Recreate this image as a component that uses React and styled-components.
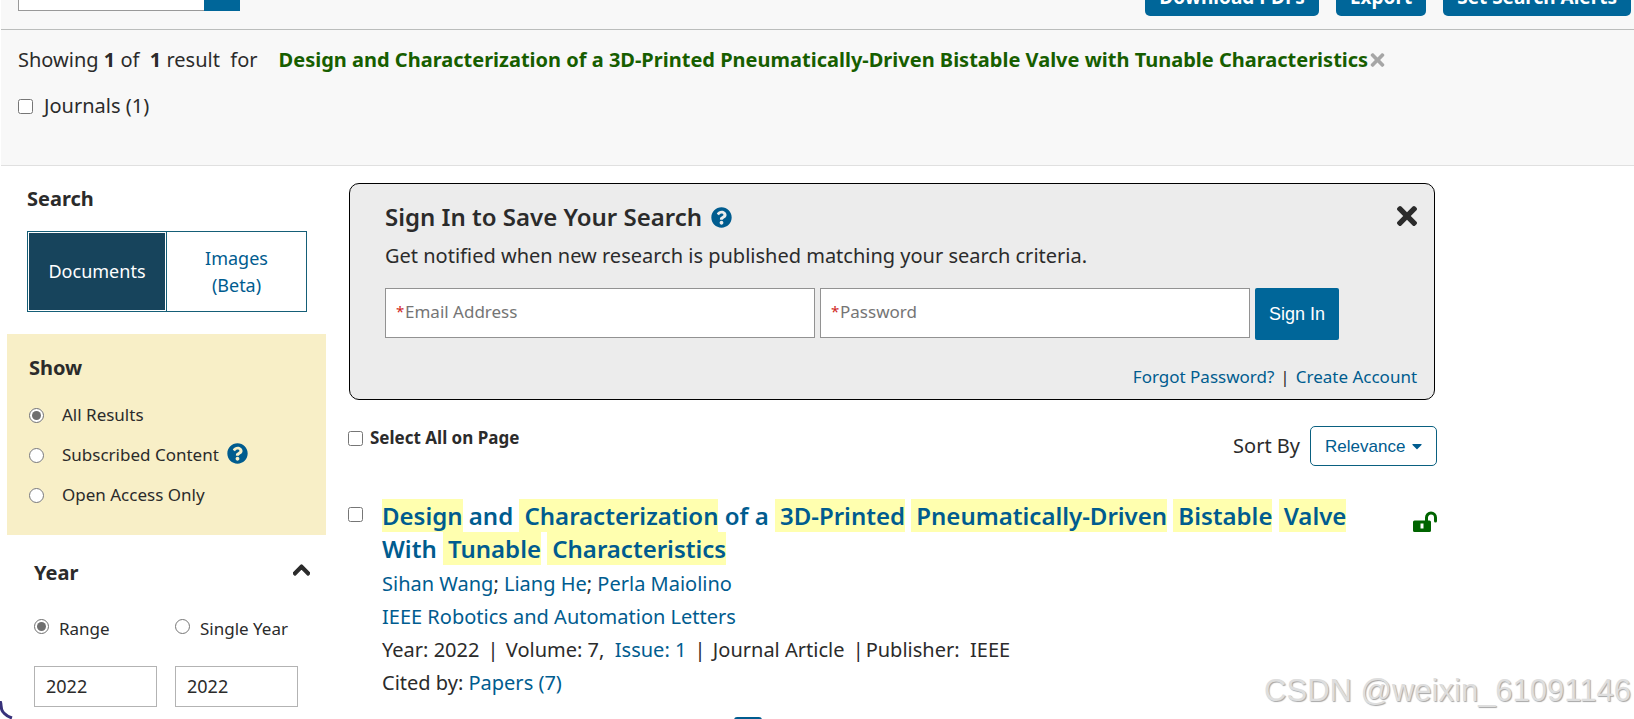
import React from "react";
import styled, { createGlobalStyle } from "styled-components";
import {
  FaChevronUp,
  FaCaretDown,
  FaQuestionCircle,
  FaTimes,
} from "react-icons/fa";

const GlobalStyle = createGlobalStyle`
  * {
    box-sizing: border-box;
  }

  body {
    margin: 0;
    background: #fff;
    color: #2b2b2b;
    font-family: "Noto Sans", "Open Sans", sans-serif;
    font-size: 20px;
    line-height: 28px;
  }

  h2, h3, p {
    margin: 0;
  }

  input, button, select {
    font-family: inherit;
  }

  input[type="checkbox"], input[type="radio"] {
    flex: none;
    width: 15px;
    height: 15px;
    margin: 0;
    accent-color: #6f6f6f;
  }
`;

const Page = styled.div`
  position: relative;
  height: 100vh;
  padding-left: 1px;
  overflow: hidden;
`;

const Toolbar = styled.header`
  display: flex;
  justify-content: space-between;
  align-items: flex-end;
  height: 30px;
  padding: 0 3px 0 17px;
  overflow: hidden;
  background: #f8f8f8;
  border-bottom: 1px solid #bbbdbc;
`;

const SearchWithin = styled.form`
  display: flex;
  width: 222px;
  margin-bottom: 18px;

  input {
    flex: 1;
    min-width: 0;
    height: 40px;
    border: 1px solid #999;
    border-right: 0;
    background: #fff;
  }

  button {
    width: 36px;
    border: 0;
    background: #069;
  }
`;

const ToolbarActions = styled.div`
  display: flex;
  gap: 17px;
  margin-bottom: 13px;
`;

const ActionButton = styled.button`
  height: 38px;
  padding: 0 14px;
  border: 0;
  border-radius: 5px;
  background: #069;
  color: #fff;
  font-size: 19px;
  font-weight: 700;
  white-space: nowrap;
`;

const Summary = styled.section`
  display: flex;
  flex-direction: column;
  gap: 18px;
  padding: 16px 17px 45px;
  background: #f8f8f8;
  border-bottom: 1px solid #e0e0e0;
`;

const ResultCount = styled.div`
  display: flex;
  align-items: center;
  white-space: pre;
`;

const Query = styled.strong`
  margin-left: 21px;
  color: #175e00;
`;

const IconButton = styled.button`
  display: flex;
  align-items: center;
  padding: 0;
  border: 0;
  background: none;
  color: ${({ $color }) => $color || "#2b2b2b"};

  svg {
    width: ${({ $width }) => $width}px;
    height: ${({ $height }) => $height}px;
  }
`;

const CheckLabel = styled.label`
  display: flex;
  align-items: center;
  align-self: flex-start;
  gap: ${({ $gap }) => $gap || "11px"};
  font-size: ${({ $bold }) => ($bold ? "17px" : "20px")};
  font-weight: ${({ $bold }) => ($bold ? 700 : 400)};
  line-height: ${({ $bold }) => ($bold ? "24px" : "28px")};
`;

const Content = styled.div`
  display: flex;
  align-items: flex-start;
`;

const Sidebar = styled.aside`
  flex: none;
  width: 319px;
  margin-left: 6px;
  padding-top: 19px;
`;

const Heading = styled.h3`
  font-size: 20px;
  line-height: 28px;
`;

const SearchType = styled.section`
  padding: 0 19px 22px 20px;
`;

const TypeTabs = styled.div`
  display: grid;
  grid-template-columns: 1fr 1fr;
  height: 81px;
  margin-top: 18px;
  border: 1px solid #155e77;
`;

const TypeTab = styled.button`
  padding: 0 26px;
  border: 0;
  background: #fff;
  color: #005c8f;
  font-size: 18px;
  line-height: 27px;

  &:first-child {
    padding: 0;
    border-right: 1px solid #155e77;
  }

  ${({ $active }) =>
    $active &&
    `
    background: #17445c;
    color: #fff;
    box-shadow: inset 0 0 0 1px #fff;
  `}
`;

const ShowPanel = styled.section`
  padding: 20px 22px;
  background: #f8efc7;
`;

const RadioList = styled.div`
  margin-top: 13px;
`;

const RadioRow = styled.div`
  display: flex;
  align-items: center;
  gap: 8px;
  height: 40px;
  font-size: 17px;

  label {
    display: flex;
    align-items: center;
    gap: 18px;
  }

  > svg {
    margin-bottom: 4px;
  }
`;

const HelpIcon = styled(FaQuestionCircle)`
  width: 21px;
  height: 21px;
  color: #005c8f;
`;

const YearPanel = styled.section`
  padding: 24px 28px 0 27px;
`;

const YearHeader = styled.div`
  display: flex;
  justify-content: space-between;
  align-items: flex-start;
  margin-right: -12px;
`;

const YearGrid = styled.div`
  display: grid;
  grid-template-columns: 1fr 1fr;
  column-gap: 18px;
  row-gap: 23px;
  margin-top: 28px;

  label {
    display: flex;
    align-items: flex-start;
    gap: 10px;
    font-size: 17px;
  }

  label input {
    margin-top: 4px;
  }
`;

const YearInput = styled.input`
  width: 100%;
  height: 41px;
  padding: 0 11px 2px;
  border: 1px solid #b3b3b3;
  color: #2b2b2b;
  font-size: 18px;
`;

const Main = styled.main`
  flex: 1;
  min-width: 0;
  margin: 17px 12% 0 22px;
  padding-right: 1px;
`;

const SignInCard = styled.section`
  margin: 0 2px 0 1px;
  padding: 17px 17px 8px 35px;
  border: 1px solid #000;
  border-radius: 10px;
  background: #ececec;
`;

const CardHeader = styled.div`
  display: flex;
  justify-content: space-between;
  align-items: flex-start;
  margin-bottom: 9px;

  h2 {
    display: flex;
    align-items: center;
    gap: 9px;
    font-size: 24px;
    font-weight: 600;
    line-height: 32px;
  }
`;

const SignInForm = styled.form`
  display: flex;
  align-items: flex-start;
  gap: 5px;
  margin: 18px 78px 23px 0;
`;

const Field = styled.label`
  display: flex;
  flex: 1;
  align-items: center;
  height: 50px;
  padding: 0 10px 4px;
  border: 1px solid #929292;
  background: #fff;

  span {
    width: 9px;
    color: #d0261d;
    font-size: 15px;
  }

  input {
    flex: 1;
    min-width: 0;
    padding: 0;
    border: 0;
    outline: 0;
    font-size: 17px;
  }

  input::placeholder {
    color: #757575;
  }
`;

const SignInButton = styled.button`
  width: 84px;
  height: 52px;
  padding: 0;
  border: 0;
  border-radius: 2px;
  background: #069;
  color: #fff;

  && {
    font-family: "Liberation Sans", Arial, sans-serif;
    font-size: 18px;
  }
`;

const AccountLinks = styled.div`
  display: flex;
  justify-content: flex-end;
  gap: 6px;
  font-size: 17px;
`;

const Link = styled.a`
  color: #005c8f;
  text-decoration: none;
`;

const ListControls = styled.div`
  display: flex;
  justify-content: space-between;
  margin-top: 26px;
`;

const Sort = styled.label`
  display: flex;
  align-items: center;
  gap: 10px;
`;

const SelectBox = styled.span`
  position: relative;
  display: flex;
  align-items: center;

  select {
    width: 127px;
    height: 40px;
    padding: 0 0 0 14px;
    border: 1px solid #0a6080;
    border-radius: 5px;
    appearance: none;
    background: #fff;
    color: #005c8f;
    font-family: "Liberation Sans", Arial, sans-serif;
    font-size: 17px;
  }

  svg {
    position: absolute;
    right: 13px;
    width: 14px;
    height: 16px;
    color: #005c8f;
    pointer-events: none;
  }
`;

const Result = styled.article`
  display: flex;
  align-items: flex-start;
  margin-top: 33px;

  > input {
    margin-top: 8px;
  }
`;

const ResultBody = styled.div`
  flex: 1;
  min-width: 0;
  margin: 0 30px 0 19px;
  line-height: 33px;
`;

const ResultTitle = styled.h2`
  margin-bottom: 2px;
  font-size: 24px;
  font-weight: 600;
  line-height: 33px;
`;

const Mark = styled.mark`
  padding-left: ${({ $first }) => ($first ? 0 : "5px")};
  background: #ffffaf;
  color: inherit;
`;

const Separator = styled.span`
  margin: 0 2px 0 3px;
`;

const OpenAccessIcon = styled.svg`
  flex: none;
  width: 24px;
  height: 21px;
  margin-top: 12px;
  color: #006400;
`;

const AbstractToggle = styled.button`
  display: block;
  width: 28px;
  height: 28px;
  margin: 18px 0 0 352px;
  border: 0;
  border-radius: 3px;
  background: #005c8f;
`;

const Squiggle = styled.svg`
  position: absolute;
  left: 0;
  bottom: 0;
`;

const Watermark = styled.div`
  position: absolute;
  right: 3px;
  bottom: 10px;
  color: #dedede;
  font-family: "Liberation Sans", Arial, sans-serif;
  font-size: 31px;
  line-height: 36px;
  text-shadow: 1px 1px 1px #a6a6a6;
`;

// words of the title that matched the query are highlighted
const titleWords = [
  { text: "Design", hit: true },
  { text: "and" },
  { text: "Characterization", hit: true },
  { text: "of a" },
  { text: "3D-Printed", hit: true },
  { text: "Pneumatically-Driven", hit: true },
  { text: "Bistable", hit: true },
  { text: "Valve", hit: true },
  { text: "With" },
  { text: "Tunable", hit: true },
  { text: "Characteristics", hit: true },
];

const showOptions = [
  { text: "All Results" },
  { text: "Subscribed Content", help: true },
  { text: "Open Access Only" },
];

const authors = ["Sihan Wang", "Liang He", "Perla Maiolino"];

const Filters = () => (
  <Sidebar>
    <SearchType>
      <Heading>Search</Heading>
      <TypeTabs>
        <TypeTab type="button" $active>
          Documents
        </TypeTab>
        <TypeTab type="button">Images (Beta)</TypeTab>
      </TypeTabs>
    </SearchType>

    <ShowPanel>
      <Heading>Show</Heading>
      <RadioList>
        {showOptions.map((option, index) => (
          <RadioRow key={option.text}>
            <label>
              <input type="radio" name="show" defaultChecked={index === 0} />
              {option.text}
            </label>
            {option.help && <HelpIcon />}
          </RadioRow>
        ))}
      </RadioList>
    </ShowPanel>

    <YearPanel>
      <YearHeader>
        <Heading>Year</Heading>
        <IconButton
          type="button"
          aria-label="Collapse year"
          $width={17}
          $height={22}
        >
          <FaChevronUp stroke="currentColor" strokeWidth="30" />
        </IconButton>
      </YearHeader>
      <YearGrid>
        <label>
          <input type="radio" name="year" defaultChecked />
          Range
        </label>
        <label>
          <input type="radio" name="year" />
          Single Year
        </label>
        <YearInput aria-label="From year" defaultValue="2022" />
        <YearInput aria-label="To year" defaultValue="2022" />
      </YearGrid>
    </YearPanel>
  </Sidebar>
);

const SignIn = () => (
  <SignInCard>
    <CardHeader>
      <h2>
        Sign In to Save Your Search
        <HelpIcon />
      </h2>
      <IconButton type="button" aria-label="Close" $width={20} $height={30}>
        <FaTimes />
      </IconButton>
    </CardHeader>
    <p>
      Get notified when new research is published matching your search criteria.
    </p>
    <SignInForm>
      <Field>
        <span>*</span>
        <input type="email" aria-label="Email Address" placeholder="Email Address" />
      </Field>
      <Field>
        <span>*</span>
        <input type="password" aria-label="Password" placeholder="Password" />
      </Field>
      <SignInButton type="button">Sign In</SignInButton>
    </SignInForm>
    <AccountLinks>
      <Link href="#forgot">Forgot Password?</Link>
      <span>|</span>
      <Link href="#create">Create Account</Link>
    </AccountLinks>
  </SignInCard>
);

const ResultItem = () => (
  <Result>
    <input type="checkbox" aria-label="Select result" />
    <ResultBody>
      <ResultTitle>
        <Link href="#article">
          {titleWords.map((word, index) => (
            <React.Fragment key={word.text}>
              {index > 0 && " "}
              {word.hit ? <Mark $first={index === 0}>{word.text}</Mark> : word.text}
            </React.Fragment>
          ))}
        </Link>
      </ResultTitle>
      <p>
        {authors.map((author, index) => (
          <React.Fragment key={author}>
            {index > 0 && "; "}
            <Link href="#author">{author}</Link>
          </React.Fragment>
        ))}
      </p>
      <p>
        <Link href="#journal">IEEE Robotics and Automation Letters</Link>
      </p>
      <p>
        Year: 2022 <Separator>|</Separator> Volume: 7,&nbsp;{" "}
        <Link href="#issue">Issue: 1</Link> <Separator>|</Separator> Journal
        Article <Separator>|</Separator>Publisher:&nbsp; IEEE
      </p>
      <p>
        Cited by: <Link href="#citations">Papers (7)</Link>
      </p>
      <AbstractToggle type="button" aria-label="Abstract" />
    </ResultBody>
    <OpenAccessIcon viewBox="0 0 24 21">
      <path
        fill="currentColor"
        fillRule="evenodd"
        d="M1.5 9.5h15a1.5 1.5 0 0 1 1.5 1.5v8.500a1.500 1.500 0 0 1-1.500 1.500h-15a1.500 1.500 0 0 1-1.500-1.500v-8.500a1.500 1.500 0 0 1 1.500-1.500zM7.500 12.500v5h3v-5z"
      />
      <path
        d="M13.500 10V6.500a4.500 4.500 0 0 1 9 0v3.500"
        fill="none"
        stroke="currentColor"
        strokeWidth="3"
        strokeLinecap="round"
      />
    </OpenAccessIcon>
  </Result>
);

const App = () => {
  return (
    <Page>
      <GlobalStyle />
      <Toolbar>
        <SearchWithin>
          <input type="text" aria-label="Search within results" />
          <button type="button" aria-label="Search" />
        </SearchWithin>
        <ToolbarActions>
          <ActionButton type="button">Download PDFs</ActionButton>
          <ActionButton type="button">Export</ActionButton>
          <ActionButton type="button">Set Search Alerts</ActionButton>
        </ToolbarActions>
      </Toolbar>

      <Summary>
        <ResultCount>
          Showing <b>1</b> of{"  "}
          <b>1</b> result{"  "}for
          <Query>
            Design and Characterization of a 3D-Printed Pneumatically-Driven
            Bistable Valve with Tunable Characteristics
          </Query>
          <IconButton
            type="button"
            aria-label="Remove query"
            $color="#a6a6a6"
            $width={19}
            $height={20}
          >
            <FaTimes />
          </IconButton>
        </ResultCount>
        <CheckLabel>
          <input type="checkbox" />
          Journals (1)
        </CheckLabel>
      </Summary>

      <Content>
        <Filters />
        <Main>
          <SignIn />
          <ListControls>
            <CheckLabel $bold $gap="7px">
              <input type="checkbox" />
              Select All on Page
            </CheckLabel>
            <Sort>
              Sort By
              <SelectBox>
                <select>
                  <option>Relevance</option>
                </select>
                <FaCaretDown />
              </SelectBox>
            </Sort>
          </ListControls>
          <ResultItem />
        </Main>
      </Content>

      <Squiggle width="13" height="18" viewBox="0 0 13 18" fill="none">
        <path
          d="M0 0c2 3 0 8 3 11s3 4 9 6"
          stroke="#37317a"
          strokeWidth="3"
        />
      </Squiggle>
      <Watermark>CSDN @weixin_61091146</Watermark>
    </Page>
  );
};

export default App;
